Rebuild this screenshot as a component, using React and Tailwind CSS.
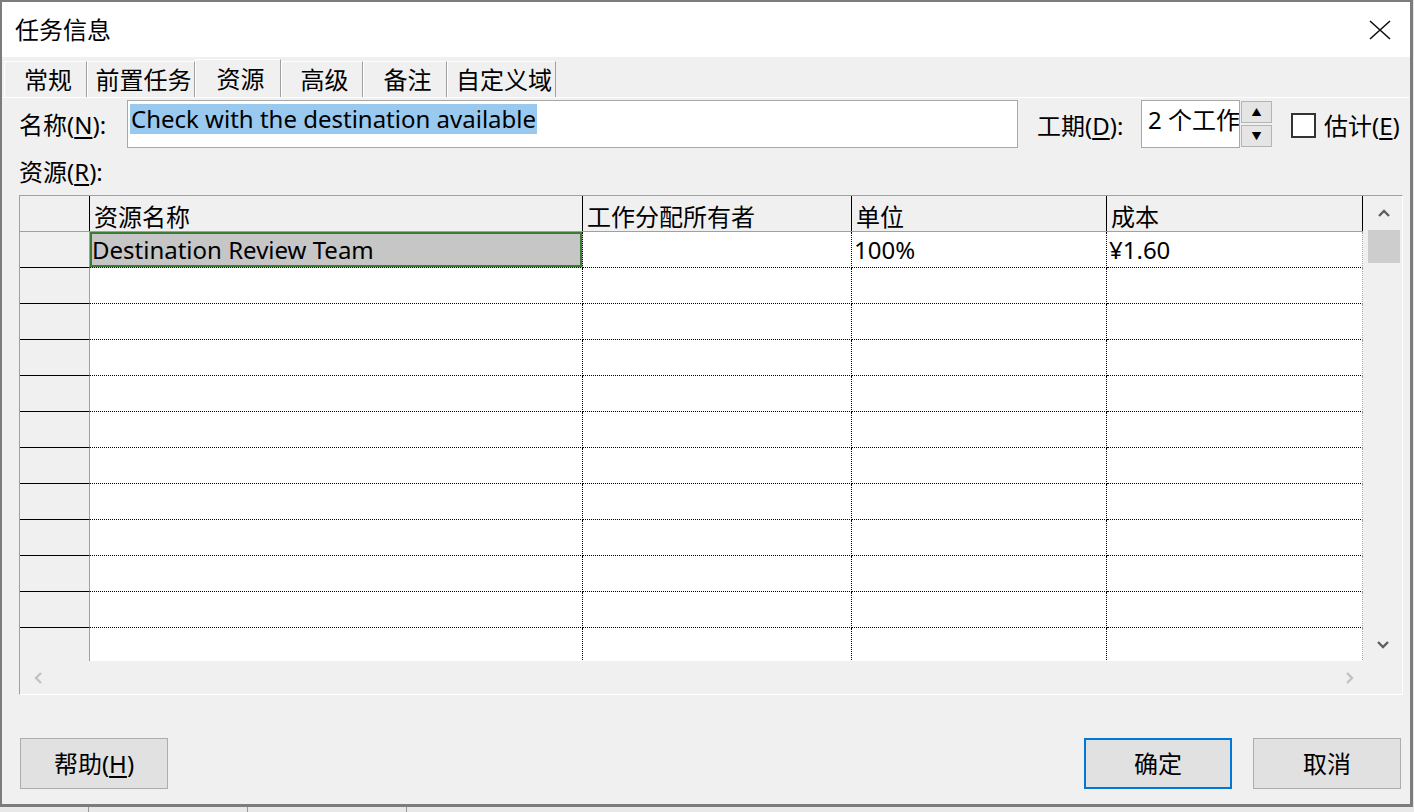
import React from 'react';

const FONT = "font-['Noto_Sans','Noto_Sans_CJK_SC',sans-serif]";

const TABS = [
  { label: '常规', w: 'w-[83px]' },
  { label: '前置任务', w: 'w-[108px]' },
  { label: '资源', w: 'w-[86px]', active: true },
  { label: '高级', w: 'w-[82px]' },
  { label: '备注', w: 'w-[84px]' },
  { label: '自定义域', w: 'w-[109px]' },
];

const COLS = [
  { title: '资源名称', w: 'w-[493px]' },
  { title: '工作分配所有者', w: 'w-[269px]' },
  { title: '单位', w: 'w-[255px]' },
  { title: '成本', w: 'w-[256px]', last: true },
];

const ROWS = [
  ['Destination Review Team', '', '100%', '¥1.60'],
  ...Array.from({ length: 11 }, () => ['', '', '', '']),
];

function Chevron({ dir, className }) {
  const d = {
    up: 'M1 7 L6 2 L11 7',
    down: 'M1 2 L6 7 L11 2',
    left: 'M7 1 L2 6 L7 11',
    right: 'M2 1 L7 6 L2 11',
  }[dir];
  const vertical = dir === 'up' || dir === 'down';
  return (
    <svg
      width={vertical ? 12 : 9}
      height={vertical ? 9 : 12}
      viewBox={vertical ? '0 0 12 9' : '0 0 9 12'}
      className={className}
    >
      <path d={d} fill="none" stroke="currentColor" strokeWidth="2.4" />
    </svg>
  );
}

function Button({ children, primary }) {
  return (
    <button
      className={`h-[51px] w-[148px] bg-[#e1e1e1] text-[24px] leading-[30px] text-black flex items-center justify-center ${
        primary ? 'border-2 border-[#0078d7]' : 'border border-[#adadad]'
      }`}
    >
      {children}
    </button>
  );
}

function ResourceGrid() {
  return (
    <div className="ml-[17px] w-[1384px] h-[500px] border-t border-l border-t-[#a0a0a0] border-l-[#a0a0a0] border-b border-r border-b-white border-r-white flex flex-col">
      <div className="flex h-[465px]">
        {/* table */}
        <div className="w-[1343px] h-[465px] overflow-hidden bg-white">
          <div className="flex h-[36px] bg-[#f0f0f0] border-b border-[#a0a0a0]">
            <div className="w-[70px] border-r border-black" />
            {COLS.map((c) => (
              <div
                key={c.title}
                className={`${c.w} border-r border-black pl-[4px] pt-[6px] flex items-center text-[24px] leading-[30px] whitespace-nowrap`}
              >
                {c.title}
              </div>
            ))}
          </div>
          {ROWS.map((r, i) => (
            <div key={i} className="flex h-[36px]">
              <div className="w-[70px] bg-[#f0f0f0] border-r border-r-[#a0a0a0] border-b border-b-black" />
              {COLS.map((c, j) => {
                const selected = i === 0 && j === 0;
                return (
                  <div
                    key={j}
                    className={`${c.w} ${
                      c.last ? 'border-r border-r-[#a0a0a0]' : 'border-r border-dotted border-r-black'
                    } border-b border-dotted border-b-black pl-[2px] flex items-center text-[24px] leading-[30px] whitespace-nowrap ${
                      selected ? 'bg-[#c6c6c6] shadow-[inset_0_0_0_2px_#3b7b34]' : ''
                    }`}
                  >
                    {r[j]}
                  </div>
                );
              })}
            </div>
          ))}
        </div>
        {/* vertical scrollbar */}
        <div className="w-[39px] bg-[#f0f0f0] flex flex-col items-center">
          <div className="h-[34px] w-full flex items-center justify-center pl-[2px] text-[#606060]">
            <Chevron dir="up" />
          </div>
          <div className="ml-[5px] self-start w-[32px] h-[33px] bg-[#cdcdcd]" />
          <div className="flex-1" />
          <div className="h-[34px] w-full flex items-center justify-center text-[#606060]">
            <Chevron dir="down" />
          </div>
        </div>
      </div>
      {/* horizontal scrollbar */}
      <div className="flex-1 bg-[#f0f0f0] flex items-center justify-between pl-[14px] pr-[48px] text-[#c2c2c2]">
        <Chevron dir="left" />
        <Chevron dir="right" />
      </div>
    </div>
  );
}

export default function App() {
  return (
    <div className={`w-[1414px] h-[812px] bg-[#e8e8e8] overflow-hidden text-black ${FONT}`}>
      <div className="w-[1413px] h-[807px] border-l-2 border-t-2 border-r-[3px] border-b-[3px] border-[#7c7c7c] bg-[#f0f0f0] flex flex-col">
        {/* title bar */}
        <div className="h-[55px] bg-white flex items-center justify-between pl-[13px] pr-[19px]">
          <span className="text-[24px] leading-[30px]">任务信息</span>
          <svg width="22" height="20" viewBox="0 0 22 20">
            <path d="M1 1 L21 19 M21 1 L1 19" stroke="#111" strokeWidth="1.6" fill="none" />
          </svg>
        </div>

        {/* tabs */}
        <div className="h-[40px] flex items-end pl-[2px]">
          {TABS.map((t) => (
            <div
              key={t.label}
              className={`${t.w} ${
                t.active ? 'h-[38px]' : 'h-[36px]'
              } bg-[#f0f0f0] border-t border-l border-white border-r border-r-[#a0a0a0] pl-[5px] flex items-center justify-center text-[24px] leading-[30px] whitespace-nowrap`}
            >
              {t.label}
            </div>
          ))}
        </div>

        {/* panel */}
        <div className="flex-1 border-t border-white flex flex-col">
          <div className="mt-[2px] h-[48px] flex items-center pl-[17px]">
            <span className="w-[108px] text-[24px] leading-[30px] whitespace-nowrap pt-[2px]">
              名称(<span className="underline underline-offset-[3px]">N</span>):
            </span>
            <div className="w-[891px] h-[48px] bg-white border border-[#a8a8a8] pl-[2px] pt-[3px]">
              <span className="bg-[#99c9ef] px-[1px] text-[24px] leading-[30px] inline-block whitespace-nowrap">
                Check with the destination available
              </span>
            </div>
            <span className="ml-[19px] w-[104px] text-[24px] leading-[30px] whitespace-nowrap pt-[3px]">
              工期(<span className="underline underline-offset-[3px]">D</span>):
            </span>
            <div className="w-[99px] h-[48px] bg-white border border-[#a8a8a8] pl-[6px] pt-[2px] overflow-hidden whitespace-nowrap text-[24px] leading-[34px]">
              2 个工作日
            </div>
            <div className="ml-[1px] w-[31px] h-[48px] flex flex-col justify-between py-[1px]">
              <div className="h-[22px] bg-[#e5e5e5] border border-[#b4b4b4] flex items-center justify-center text-[10px] leading-[10px]">
                ▲
              </div>
              <div className="h-[22px] bg-[#e5e5e5] border border-[#b4b4b4] flex items-center justify-center text-[10px] leading-[10px]">
                ▼
              </div>
            </div>
            <div className="ml-[19px] mt-[2px] w-[25px] h-[25px] border-2 border-[#333] bg-white" />
            <span className="ml-[8px] text-[24px] leading-[30px] whitespace-nowrap pt-[3px]">
              估计(<span className="underline underline-offset-[3px]">E</span>)
            </span>
          </div>

          <div className="h-[47px] flex items-center pl-[17px]">
            <span className="text-[24px] leading-[30px]">
              资源(<span className="underline underline-offset-[3px]">R</span>):
            </span>
          </div>

          <ResourceGrid />

          <div className="mt-[43px] flex justify-between pl-[18px] pr-[9px]">
            <Button>
              帮助(<span className="underline underline-offset-[3px]">H</span>)
            </Button>
            <div className="flex gap-[21px]">
              <Button primary>确定</Button>
              <Button>取消</Button>
            </div>
          </div>
        </div>
      </div>
      {/* underlying window peeking out */}
      <div className="h-[5px] flex overflow-hidden">
        <div className="w-[89px] border-r border-[#999]" />
        <div className="w-[159px] border-r border-[#999]" />
        <div className="w-[159px] border-r border-[#999]" />
      </div>
    </div>
  );
}
